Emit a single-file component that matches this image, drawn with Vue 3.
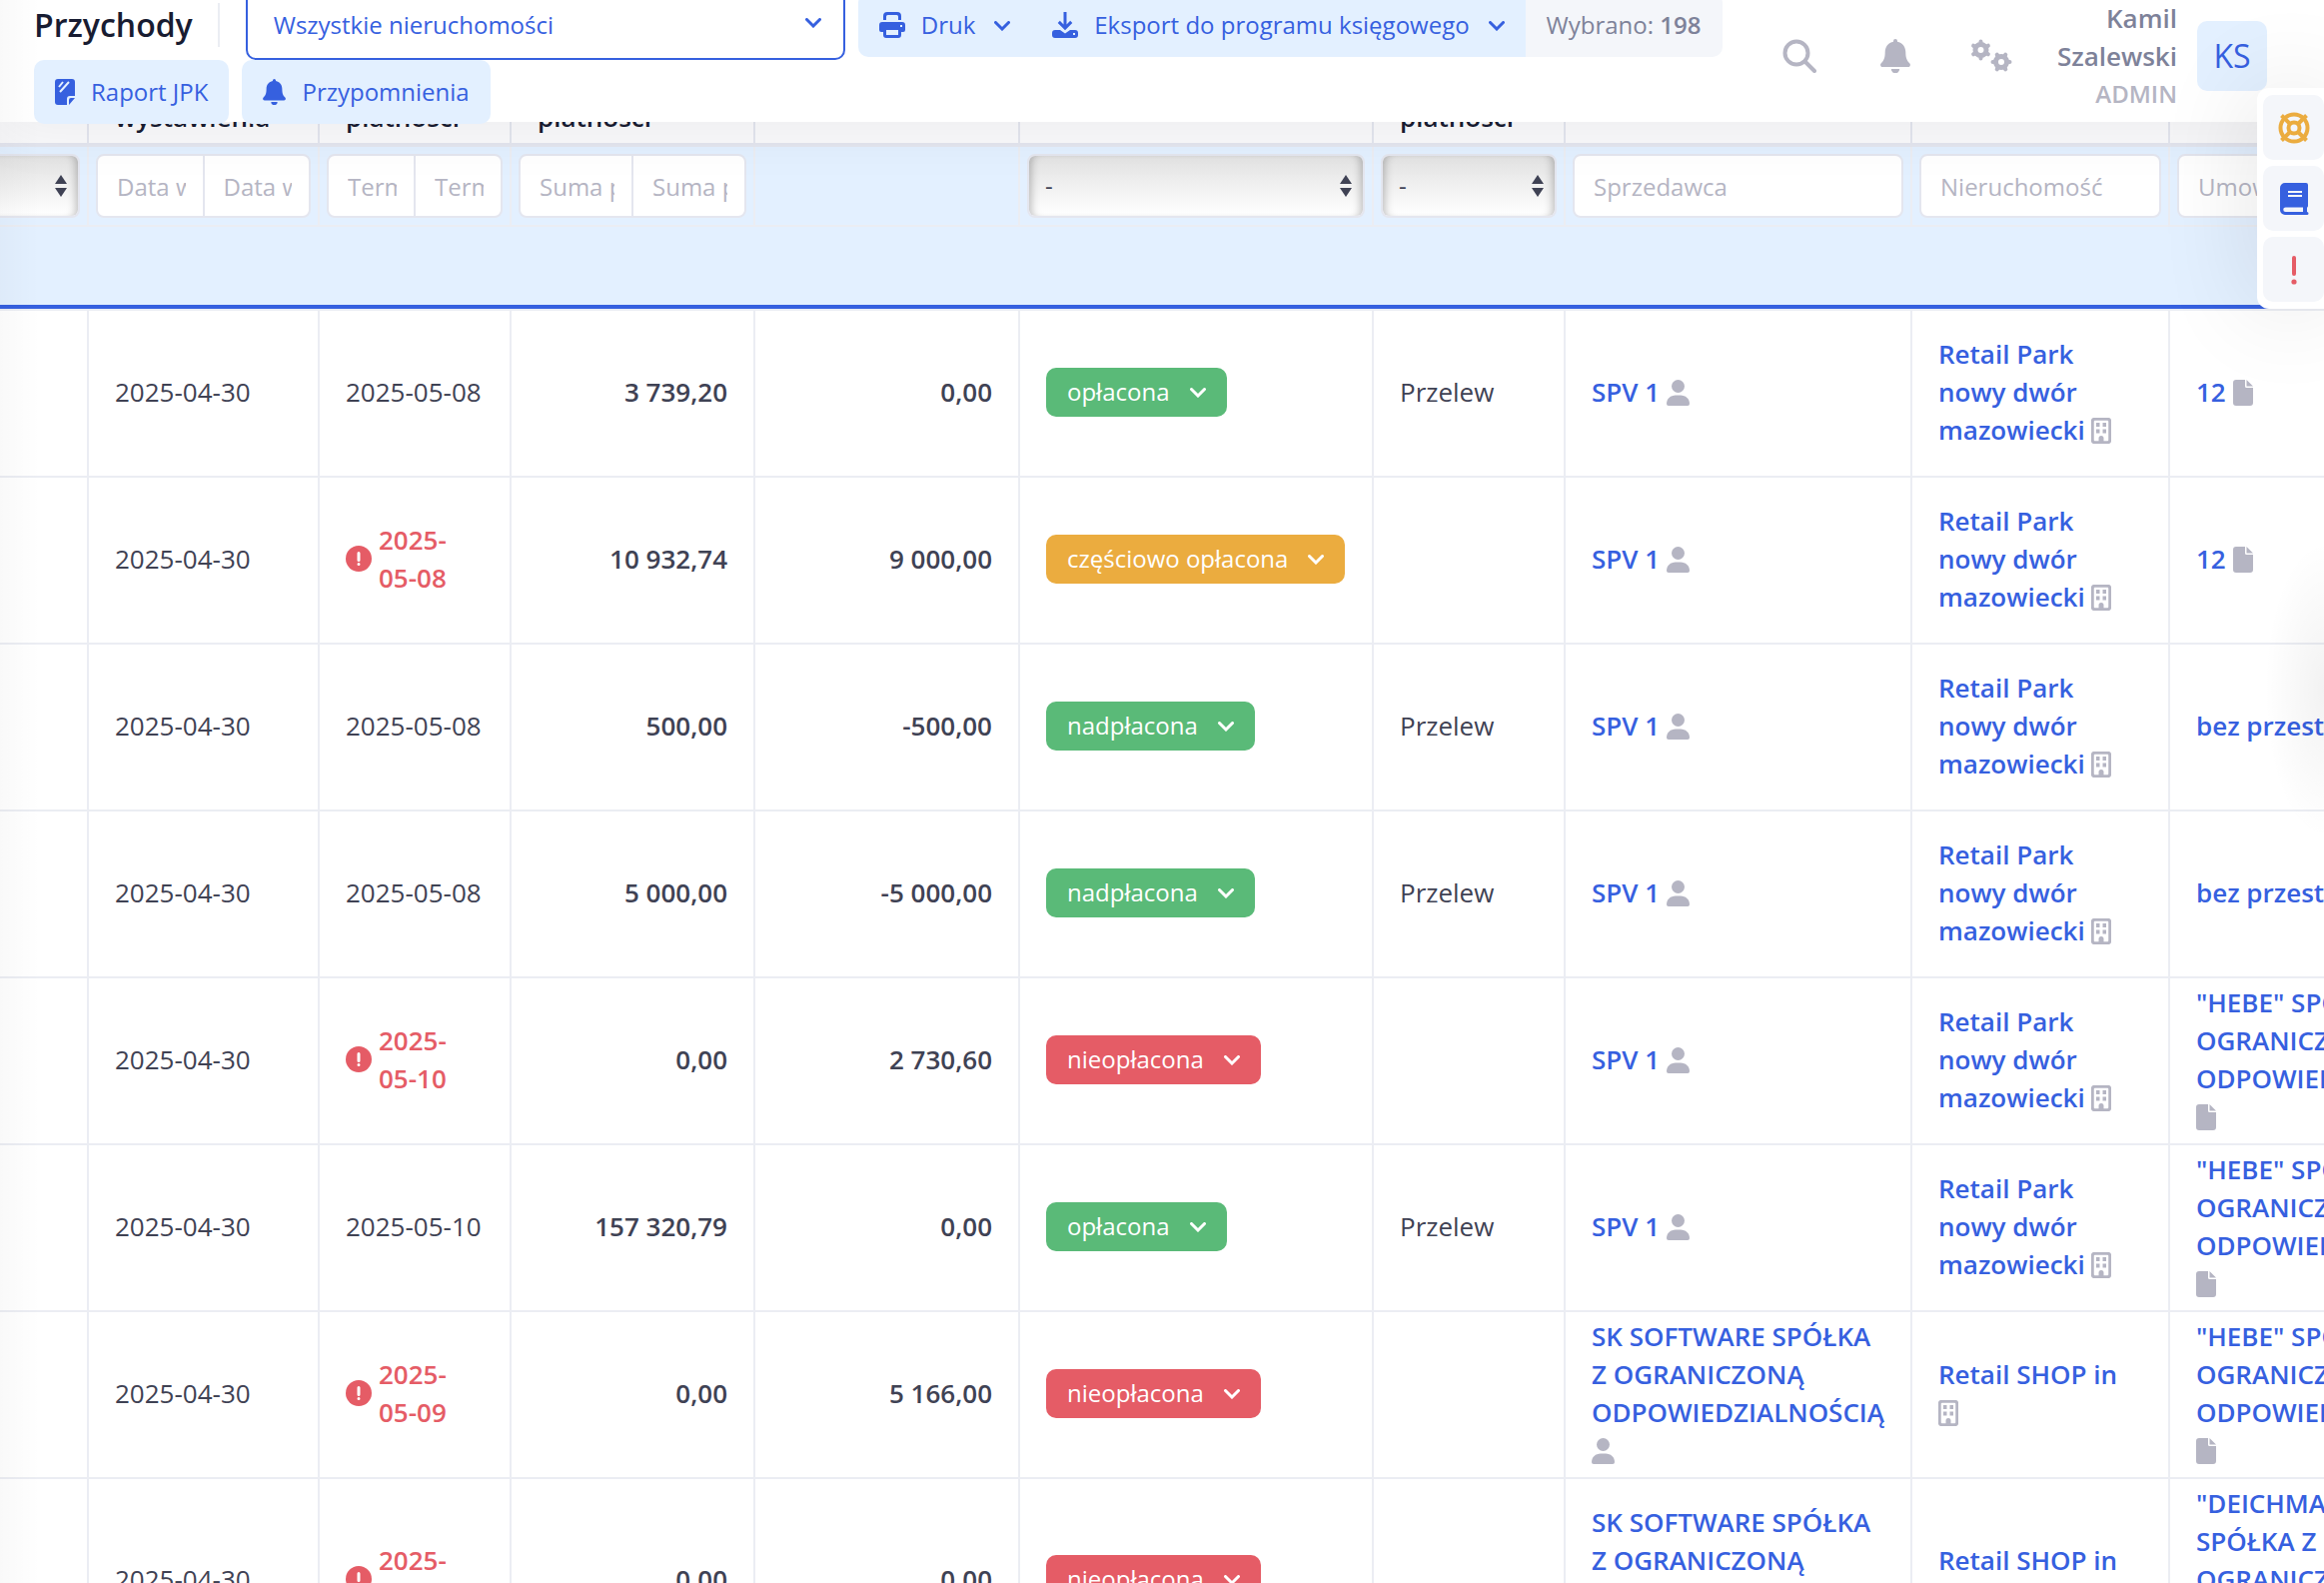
<template>
  <div class="page">
    <header class="topbar">
      <div class="toolbar">
        <h1 class="title">Przychody</h1>
        <span class="divider"></span>
        <div class="property-select">
          <select aria-label="Nieruchomość">
            <option>Wszystkie nieruchomości</option>
          </select>
          <svg class="chevron" viewBox="0 0 16 10"><path d="M1.500 1.500L8 8l6.500-6.500" /></svg>
        </div>
        <div class="button-group">
          <button type="button" class="btn">
            <svg class="btn-icon" viewBox="0 0 26 26">
              <path fill-rule="evenodd" d="M4 8V4a4 4 0 0 1 4-4h10a4 4 0 0 1 4 4v4h-3V4.500a1.500 1.500 0 0 0-1.500-1.500h-9A1.500 1.500 0 0 0 7 4.500V8zM3 10h20a3 3 0 0 1 3 3v5a2 2 0 0 1-2 2h-2v3a3 3 0 0 1-3 3H7a3 3 0 0 1-3-3v-3H2a2 2 0 0 1-2-2v-5a3 3 0 0 1 3-3zm4 8v5h12v-5zm14-5v2h2v-2z" />
            </svg>
            Druk
            <svg class="chevron" viewBox="0 0 16 10"><path d="M1.500 1.500L8 8l6.500-6.500" /></svg>
          </button>
          <button type="button" class="btn">
            <svg class="btn-icon" viewBox="0 0 26 26">
              <path d="M11.500 0h3v12.500l3.700-3.700 2.100 2.100L13 18.200l-7.300-7.300 2.100-2.100 3.700 3.700z" />
              <path fill-rule="evenodd" d="M3 18h5l5 3.500L18 18h5a3 3 0 0 1 3 3v2a3 3 0 0 1-3 3H3a3 3 0 0 1-3-3v-2a3 3 0 0 1 3-3zm18 3v2h2v-2z" />
            </svg>
            Eksport do programu księgowego
            <svg class="chevron" viewBox="0 0 16 10"><path d="M1.500 1.500L8 8l6.500-6.500" /></svg>
          </button>
          <span class="selected-count">Wybrano:&nbsp;<b>198</b></span>
        </div>
        <div class="line-break"></div>
        <button type="button" class="btn btn-single">
          <svg class="btn-icon btn-icon-narrow" viewBox="0 0 20 26">
            <path d="M3 0h14a3 3 0 0 1 3 3v14h-5a3 3 0 0 0-3 3v6H3a3 3 0 0 1-3-3V3a3 3 0 0 1 3-3zM20 19l-6 7v-5a2 2 0 0 1 2-2z" />
            <path class="scratch" d="M4 8l4-5M5 13l9-10" />
          </svg>
          Raport JPK
        </button>
        <button type="button" class="btn btn-single">
          <svg class="btn-icon btn-icon-bell" viewBox="0 0 30 34"><path :d="bellPath" /></svg>
          Przypomnienia
        </button>
      </div>

      <div class="user-area">
        <button type="button" class="icon-btn" aria-label="Szukaj">
          <svg viewBox="0 0 34 34"><circle class="line" cx="14" cy="14" r="11.500" /><path class="line" d="M22.500 22.500l9.500 9.500" /></svg>
        </button>
        <button type="button" class="icon-btn" aria-label="Powiadomienia">
          <svg class="bell" viewBox="0 0 30 34"><path :d="bellPath" /></svg>
        </button>
        <button type="button" class="icon-btn" aria-label="Ustawienia">
          <svg class="gears" viewBox="0 0 42 34">
            <circle class="gear" cx="10.500" cy="11" r="5.500" />
            <path class="teeth" d="M10.500 4V2.500M10.500 18v1.500M16.600 7.500l1.300-.8M16.600 14.500l1.300.8M4.400 7.500l-1.300-.8M4.400 14.500l-1.300.8" />
            <circle class="gear" cx="31" cy="23" r="5.500" />
            <path class="teeth" d="M24 23h-1.500M38 23h1.500M27.500 16.900l-.8-1.300M34.500 16.900l.8-1.300M27.500 29.100l-.8 1.300M34.500 29.100l.8 1.300" />
          </svg>
        </button>
        <div class="user">
          <span class="user-name">Kamil Szalewski</span>
          <span class="user-role">ADMIN</span>
        </div>
        <div class="avatar">KS</div>
      </div>
    </header>

    <main class="table-wrap">
      <table>
        <colgroup>
          <col v-for="name in columns" :key="name" :class="'col-' + name" />
        </colgroup>
        <thead>
          <tr class="head-row">
            <th></th>
            <th>wystawienia</th>
            <th>płatności</th>
            <th>płatności</th>
            <th></th>
            <th></th>
            <th>płatności</th>
            <th></th>
            <th></th>
            <th></th>
          </tr>
          <tr class="filter-row">
            <td>
              <span class="filter-select"><select aria-label="Typ"><option></option></select><i class="arrows"></i></span>
            </td>
            <td v-for="range in ranges" :key="range">
              <div class="range">
                <input type="text" :placeholder="range" :aria-label="range + ' od'" />
                <input type="text" :placeholder="range" :aria-label="range + ' do'" />
              </div>
            </td>
            <td></td>
            <td>
              <span class="filter-select"><select aria-label="Status"><option>-</option></select><i class="arrows"></i></span>
            </td>
            <td>
              <span class="filter-select"><select aria-label="Forma płatności"><option>-</option></select><i class="arrows"></i></span>
            </td>
            <td><input type="text" placeholder="Sprzedawca" aria-label="Sprzedawca" /></td>
            <td><input type="text" placeholder="Nieruchomość" aria-label="Nieruchomość" /></td>
            <td><input type="text" placeholder="Umowa" aria-label="Umowa" /></td>
          </tr>
          <tr class="spacer-row">
            <td colspan="10"></td>
          </tr>
        </thead>
        <tbody>
          <tr v-for="(row, i) in rows" :key="i">
            <td></td>
            <td>2025-04-30</td>
            <td>
              <div v-if="row.overdue" class="overdue">
                <svg viewBox="0 0 26 26"><circle cx="13" cy="13" r="13" /><path d="M13 7.500v7M13 18.500v.1" /></svg>
                <span>{{ row.due }}</span>
              </div>
              <template v-else>{{ row.due }}</template>
            </td>
            <td class="amount">{{ row.paid }}</td>
            <td class="amount">{{ row.left }}</td>
            <td>
              <button type="button" class="status" :class="statusClass[row.status]">
                {{ row.status }}
                <svg class="chevron" viewBox="0 0 16 10"><path d="M1.500 1.500L8 8l6.500-6.500" /></svg>
              </button>
            </td>
            <td>{{ row.method }}</td>
            <td>
              <a href="#">{{ row.seller }}</a>&#32;<svg class="cell-icon icon-user" viewBox="0 0 23 26"><ellipse cx="11.500" cy="6.500" rx="6.500" ry="6.500" /><path d="M0 24c0-5 4-8.500 9-8.500h5c5 0 9 3.500 9 8.500a2 2 0 0 1-2 2H2a2 2 0 0 1-2-2z" /></svg>
            </td>
            <td>
              <a href="#">{{ row.property }}</a>&#32;<svg class="cell-icon" viewBox="0 0 20 26"><rect class="outline" x="1.250" y="1.250" width="17.500" height="23.500" rx="2.500" /><path d="M5 5h3.500v4H5zM11.500 5H15v4h-3.500zM5 11.500h3.500v4H5zM11.500 11.500H15v4h-3.500zM7.500 25v-4.500a2.500 2.500 0 0 1 5 0V25z" /></svg>
            </td>
            <td>
              <a href="#">{{ row.contract }}</a>&#32;<svg class="cell-icon" viewBox="0 0 20 26"><path d="M3 0h9v6.500A1.500 1.500 0 0 0 13.500 8H20v15a3 3 0 0 1-3 3H3a3 3 0 0 1-3-3V3a3 3 0 0 1 3-3zM13.500 0l6.500 6.500h-6.500z" /></svg>
            </td>
          </tr>
        </tbody>
      </table>
    </main>

    <nav class="side-tools">
      <button type="button" class="warning" aria-label="Pomoc">
        <svg viewBox="0 0 32 32"><circle class="ring" cx="16" cy="16" r="13.500" /><circle class="ring" cx="16" cy="16" r="5.500" /><path class="ring" d="M3.500 3.500l8.500 8.500M28.500 3.500L20 12M3.500 28.500L12 20M28.500 28.500L20 20" /></svg>
      </button>
      <button type="button" class="primary" aria-label="Instrukcja">
        <svg viewBox="0 0 32 32"><path fill-rule="evenodd" d="M7 0h21a2 2 0 0 1 2 2v21a2 2 0 0 1-1 1.700V29a1.500 1.500 0 0 1 0 3H7a5 5 0 0 1-5-5V5a5 5 0 0 1 5-5zm3 8v2h14V8zm0 4v2h14v-2zM7.500 24.500a2.200 2.200 0 0 0 0 4.500H25v-4.500z" /></svg>
      </button>
      <button type="button" class="danger" aria-label="Zgłoś błąd">
        <svg viewBox="0 0 32 32"><path class="mark" d="M16 4v16" /><circle cx="16" cy="28" r="2.600" /></svg>
      </button>
    </nav>
  </div>
</template>

<script setup>
const bellPath = 'M15 0a2 2 0 0 1 2 2v.700c5 .9 8.300 5.200 8.300 10.300 0 6 1.200 8.500 3.900 11.200 1.500 1.600.5 3.800-1.500 3.800H2.300c-2 0-3-2.200-1.500-3.800 2.700-2.700 3.900-5.200 3.900-11.200C4.700 7.900 8 3.600 13 2.700V2a2 2 0 0 1 2-2zM10.800 30h8.400a4.200 4.200 0 0 1-8.400 0z'

const columns = ['type', 'issued', 'due', 'paid', 'left', 'status', 'method', 'seller', 'property', 'contract']

const ranges = ['Data wystawienia', 'Termin płatności', 'Suma płatności']

const statusClass = {
  'opłacona': 'paid',
  'nadpłacona': 'paid',
  'częściowo opłacona': 'partial',
  'nieopłacona': 'unpaid'
}

const park = 'Retail Park nowy dwór mazowiecki'
const shop = 'Retail SHOP in'
const software = 'SK SOFTWARE SPÓŁKA Z OGRANICZONĄ ODPOWIEDZIALNOŚCIĄ'
const hebe = '"HEBE" SPÓŁKA Z OGRANICZONĄ ODPOWIEDZIALNOŚCIĄ'
const deichmann = '"DEICHMANN" POLSKA SPÓŁKA Z OGRANICZONĄ ODPOWIEDZIALNOŚCIĄ'

const rows = [
  { due: '2025-05-08', overdue: false, paid: '3 739,20', left: '0,00', status: 'opłacona', method: 'Przelew', seller: 'SPV 1', property: park, contract: '12' },
  { due: '2025-05-08', overdue: true, paid: '10 932,74', left: '9 000,00', status: 'częściowo opłacona', method: '', seller: 'SPV 1', property: park, contract: '12' },
  { due: '2025-05-08', overdue: false, paid: '500,00', left: '-500,00', status: 'nadpłacona', method: 'Przelew', seller: 'SPV 1', property: park, contract: 'bez przestrzeni' },
  { due: '2025-05-08', overdue: false, paid: '5 000,00', left: '-5 000,00', status: 'nadpłacona', method: 'Przelew', seller: 'SPV 1', property: park, contract: 'bez przestrzeni' },
  { due: '2025-05-10', overdue: true, paid: '0,00', left: '2 730,60', status: 'nieopłacona', method: '', seller: 'SPV 1', property: park, contract: hebe },
  { due: '2025-05-10', overdue: false, paid: '157 320,79', left: '0,00', status: 'opłacona', method: 'Przelew', seller: 'SPV 1', property: park, contract: hebe },
  { due: '2025-05-09', overdue: true, paid: '0,00', left: '5 166,00', status: 'nieopłacona', method: '', seller: software, property: shop, contract: hebe },
  { due: '2025-05-09', overdue: true, paid: '0,00', left: '0,00', status: 'nieopłacona', method: '', seller: software, property: shop, contract: deichmann }
]
</script>

<style>
body {
  background: #fff;
}
</style>

<style scoped>
.page {
  position: relative;
  height: 100vh;
  overflow: hidden;
  font-family: 'Open Sans', 'Noto Sans', sans-serif;
  font-size: 26px;
  line-height: 38px;
  color: #3f4254;
}

/* shade of the menu on the left */
.page::before {
  content: '';
  position: absolute;
  inset: 0 auto 0 0;
  width: 40px;
  z-index: 3;
  background: linear-gradient(to right, rgba(0, 0, 0, 0.025), transparent);
  pointer-events: none;
}

/* shade of the drawer on the right */
.page::after {
  content: '';
  position: absolute;
  top: 540px;
  right: 0;
  width: 60px;
  height: 300px;
  z-index: 1;
  background: radial-gradient(ellipse at right, rgba(0, 0, 0, 0.05), transparent 70%);
  pointer-events: none;
}

button,
input,
select {
  font: inherit;
  color: inherit;
  margin: 0;
  box-sizing: border-box;
}

button {
  border: 0;
  background: none;
  padding: 0;
}

svg {
  fill: currentColor;
  flex-shrink: 0;
}

.chevron {
  width: 16px;
  height: 10px;
  margin-top: 2px;
  fill: none;
  stroke: currentColor;
  stroke-width: 3px;
  stroke-linecap: round;
}

.topbar {
  position: relative;
  z-index: 2;
  display: flex;
  justify-content: space-between;
  height: 132px;
  margin-top: -10px;
  padding: 0 57px 0 34px;
  background: #fff;
  box-shadow: 0 10px 60px rgba(0, 0, 0, 0.06);
  box-sizing: border-box;
}

.toolbar {
  display: flex;
  flex-wrap: wrap;
  align-items: center;
  align-content: flex-start;
  flex: 0 1 1700px;
  font-size: 24px;
}

.title {
  margin: 0;
  font-size: 32px;
  font-weight: 600;
  color: #181c32;
}

.divider {
  width: 2px;
  height: 44px;
  margin: 0 26px 0 25px;
  background: #ebedf3;
}

.property-select {
  position: relative;
  width: 600px;
  height: 70px;
  color: #3660df;
}

.property-select select {
  width: 100%;
  height: 100%;
  padding: 0 26px;
  border: 2px solid #3660df;
  border-radius: 10px;
  background: #fff;
  appearance: none;
}

.property-select .chevron {
  position: absolute;
  top: 26px;
  right: 24px;
}

.button-group {
  display: flex;
  height: 64px;
  margin-left: 13px;
  border-radius: 10px;
  overflow: hidden;
}

.btn {
  display: flex;
  align-items: center;
  gap: 16px;
  height: 64px;
  padding: 0 21px;
  color: #3660df;
  background: #e3f0ff;
}

.btn .chevron {
  margin-left: 3px;
}

.btn-icon {
  width: 26px;
  height: 26px;
}

.btn-icon-narrow {
  width: 20px;
}

.btn-icon-bell {
  width: 23px;
}

.scratch {
  fill: none;
  stroke: #e3f0ff;
  stroke-width: 2px;
}

.btn-single {
  border-radius: 10px;
  margin-right: 13px;
}

.selected-count {
  display: flex;
  align-items: center;
  padding: 0 21px;
  color: #7e8299;
  background: #f4f6fa;
}

.selected-count b {
  font-weight: 600;
}

.line-break {
  flex-basis: 100%;
}

.user-area {
  display: flex;
  align-items: center;
  color: #b5b5c3;
}

.icon-btn {
  display: flex;
  justify-content: center;
  width: 96px;
}

.icon-btn svg {
  width: 34px;
  height: 34px;
}

.icon-btn svg.bell {
  width: 30px;
}

.icon-btn svg.gears {
  width: 42px;
}

.line {
  fill: none;
  stroke: currentColor;
  stroke-width: 4px;
  stroke-linecap: round;
}

.gear {
  fill: none;
  stroke: currentColor;
  stroke-width: 5px;
}

.teeth {
  fill: none;
  stroke: currentColor;
  stroke-width: 4px;
  stroke-linecap: round;
}

.user {
  display: flex;
  flex-direction: column;
  width: 130px;
  margin-left: 8px;
  text-align: right;
}

.user-name {
  font-weight: 600;
  color: #7e8299;
}

.user-role {
  font-size: 24px;
  font-weight: 600;
}

.avatar {
  width: 70px;
  margin-left: 20px;
  border-radius: 10px;
  font-size: 32px;
  line-height: 70px;
  text-align: center;
  color: #3660df;
  background: #e3f0ff;
}

.table-wrap {
  overflow: hidden;
  margin-top: -17px;
}

/* scrolled sideways, so the first column starts outside the page */
table {
  width: 2618px;
  margin-left: -100px;
  table-layout: fixed;
  border-collapse: separate;
  border-spacing: 0;
}

.col-type { width: 189px; }
.col-issued { width: 231px; }
.col-due { width: 192px; }
.col-paid { width: 244px; }
.col-left { width: 265px; }
.col-status { width: 354px; }
.col-method { width: 192px; }
.col-seller { width: 347px; }
.col-property { width: 258px; }
.col-contract { width: 346px; }

th,
td {
  padding: 6px 26px 7px;
  border-right: 2px solid #ebedf3;
  border-bottom: 2px solid #ebedf3;
  text-align: left;
  vertical-align: middle;
}

tbody td {
  height: 152px;
  padding: 5px 26px 8px;
}

.head-row th {
  height: 38px;
  padding: 0 26px;
  border-right-color: #e4e6ef;
  border-bottom: 4px solid #e4e6ef;
  background: #fafafc;
  font-weight: 600;
  line-height: 24px;
  vertical-align: top;
  color: #181c32;
}

.filter-row td {
  padding: 7px;
  background: #e3f0ff;
}

.filter-row input,
.filter-row select {
  display: block;
  width: 100%;
  height: 64px;
  padding: 0 17px 0 19px;
  border: 2px solid #e4e6ef;
  border-radius: 8px;
  background: #fff;
  font-size: 24px;
}

.filter-row input::placeholder {
  color: #b5b5c3;
  opacity: 1;
}

.range {
  display: flex;
}

.range input:first-child {
  border-radius: 8px 0 0 8px;
}

.range input:last-child {
  margin-left: -2px;
  border-radius: 0 8px 8px 0;
}

.filter-select {
  position: relative;
  display: block;
}

.filter-row .filter-select select {
  padding: 0 16px;
  appearance: none;
  background: linear-gradient(#e2e2e2, #fff);
  box-shadow: inset 8px 0 8px -6px rgba(0, 0, 0, 0.25), inset -8px 0 8px -6px rgba(0, 0, 0, 0.25);
}

.arrows::before,
.arrows::after {
  content: '';
  position: absolute;
  right: 13px;
  border: 6px solid transparent;
}

.arrows::before {
  top: 15px;
  border-bottom: 9px solid #3f4254;
}

.arrows::after {
  top: 34px;
  border-top: 9px solid #3f4254;
}

.spacer-row td {
  height: 78px;
  padding: 0;
  border-right: 0;
  border-bottom: 4px solid #3660df;
  background: #e3f0ff;
}

tbody tr:first-child td {
  border-top: 2px solid #ebedf3;
}

.amount {
  text-align: right;
  font-weight: 600;
}

.overdue {
  display: flex;
  align-items: center;
  gap: 7px;
  color: #e55c66;
  font-weight: 600;
}

.overdue span {
  width: 70px;
}

.overdue svg {
  width: 26px;
  height: 26px;
}

.overdue path {
  stroke: #fff;
  stroke-width: 3px;
  stroke-linecap: round;
}

.status {
  display: flex;
  align-items: center;
  gap: 20px;
  height: 49px;
  padding: 0 21px;
  border-radius: 10px;
  font-size: 24px;
  white-space: nowrap;
  color: #fff;
}

.paid {
  background: #5aba78;
}

.partial {
  background: #ebac3f;
}

.unpaid {
  background: #e55c66;
}

a {
  font-weight: 600;
  color: #3660df;
  text-decoration: none;
}

.cell-icon {
  width: 20px;
  height: 26px;
  margin-right: 3px;
  color: #b5b5c3;
  vertical-align: -4px;
}

.icon-user {
  width: 23px;
}

.outline {
  fill: none;
  stroke: currentColor;
  stroke-width: 3px;
}

.side-tools {
  position: absolute;
  top: 88px;
  right: 0;
  z-index: 4;
  display: flex;
  flex-direction: column;
  gap: 6px;
  padding: 7px 0 7px 6px;
  border-radius: 12px 0 0 12px;
  background: #fff;
  box-shadow: 0 0 100px rgba(0, 0, 0, 0.12);
}

.side-tools button {
  display: flex;
  align-items: center;
  justify-content: center;
  width: 61px;
  height: 65px;
  border-radius: 10px;
  background: #f4f6fa;
}

.side-tools svg {
  width: 32px;
  height: 32px;
}

.warning {
  color: #ebac3f;
}

.primary {
  color: #3660df;
}

.danger {
  color: #e55c66;
}

.ring {
  fill: none;
  stroke: currentColor;
  stroke-width: 4px;
}

.mark {
  stroke: currentColor;
  stroke-width: 4px;
  stroke-linecap: round;
}
</style>
